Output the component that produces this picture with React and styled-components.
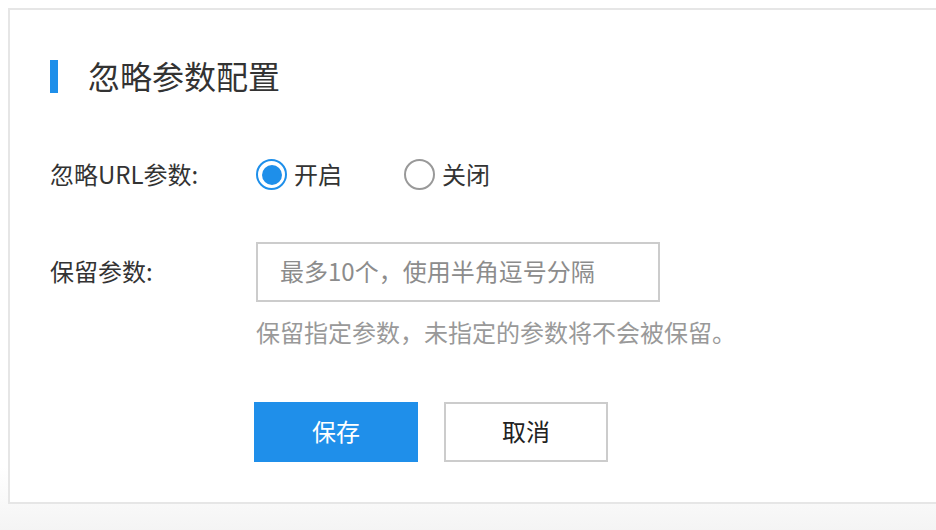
import React, { useState } from 'react';
import styled, { createGlobalStyle } from 'styled-components';

const GlobalStyle = createGlobalStyle`
  html, body {
    margin: 0;
    padding: 0;
  }
  body {
    font-family: "Noto Sans CJK SC", "Noto Sans", sans-serif;
    color: #333;
  }
`;

const Page = styled.div`
  width: 936px;
  height: 530px;
  overflow: hidden;
  box-sizing: border-box;
  padding: 8px 0 0 8px;
  background: linear-gradient(to bottom, #fff 0%, #fff 88%, #f4f4f4 100%);
`;

const Card = styled.div`
  box-sizing: border-box;
  width: 980px;
  height: 496px;
  border: 2px solid #e6e6e6;
  background: #fff;
  padding: 49px 40px 40px;
`;

const Header = styled.div`
  display: flex;
  align-items: center;
  gap: 30px;
  height: 33px;
`;

const Bar = styled.span`
  width: 8px;
  height: 33px;
  margin-top: 1px;
  background: #1e8fea;
`;

const Title = styled.h2`
  margin: 0;
  font-size: 32px;
  font-weight: 400;
  line-height: 31px;
  color: #333;
`;

const Form = styled.div`
  display: flex;
  flex-direction: column;
  margin-top: 65px;
`;

const Row = styled.div`
  display: flex;
  align-items: ${(p) => (p.$top ? 'flex-start' : 'center')};
  margin-top: ${(p) => p.$gap || 0}px;
`;

const Label = styled.div`
  width: 206px;
  flex: none;
  font-size: 24px;
  line-height: 30px;
  color: #333;
  padding-top: ${(p) => p.$pad || 0}px;
`;

const Field = styled.div`
  display: flex;
  flex-direction: column;
`;

const RadioGroup = styled.div`
  display: flex;
  align-items: center;
  gap: 62px;
`;

const Option = styled.label`
  display: flex;
  align-items: center;
  gap: 7px;
  cursor: pointer;
  font-size: 24px;
  line-height: 30px;
  color: #333;
`;

const Circle = styled.span`
  box-sizing: border-box;
  width: 31px;
  height: 31px;
  margin-top: 2px;
  border-radius: 50%;
  border: 2px solid ${(p) => (p.$on ? '#1e8fea' : '#999')};
  display: flex;
  align-items: center;
  justify-content: center;
  &::after {
    content: '';
    width: 20px;
    height: 20px;
    border-radius: 50%;
    background: #1e8fea;
    display: ${(p) => (p.$on ? 'block' : 'none')};
  }
`;

const Input = styled.input`
  box-sizing: border-box;
  width: 404px;
  height: 60px;
  border: 2px solid #ccc;
  border-radius: 0;
  padding: 0 22px 3px;
  font-family: inherit;
  font-size: 24px;
  color: #333;
  outline: none;
  &::placeholder {
    color: #8c8c8c;
  }
`;

const Hint = styled.div`
  margin-top: 18px;
  font-size: 24px;
  line-height: 24px;
  color: #999;
`;

const Actions = styled.div`
  display: flex;
  gap: 26px;
  margin-top: 58px;
  margin-left: 204px;
`;

const Button = styled.button`
  box-sizing: border-box;
  width: 164px;
  height: 60px;
  border-radius: 0;
  padding: 0 0 3px;
  font-family: inherit;
  font-size: 24px;
  cursor: pointer;
  background: ${(p) => (p.$primary ? '#1f8fea' : '#fff')};
  color: ${(p) => (p.$primary ? '#fff' : '#222')};
  border: 2px solid ${(p) => (p.$primary ? '#1f8fea' : '#ccc')};
`;

export default function App() {
  const [ignore, setIgnore] = useState(true);

  return (
    <>
      <GlobalStyle />
      <Page>
        <Card>
          <Header>
            <Bar />
            <Title>忽略参数配置</Title>
          </Header>
          <Form>
            <Row>
              <Label>忽略URL参数:</Label>
              <RadioGroup>
                <Option onClick={() => setIgnore(true)}>
                  <Circle $on={ignore} />
                  开启
                </Option>
                <Option onClick={() => setIgnore(false)}>
                  <Circle $on={!ignore} />
                  关闭
                </Option>
              </RadioGroup>
            </Row>
            <Row $top $gap={52}>
              <Label $pad={14}>保留参数:</Label>
              <Field>
                <Input placeholder="最多10个，使用半角逗号分隔" />
                <Hint>保留指定参数，未指定的参数将不会被保留。</Hint>
              </Field>
            </Row>
            <Actions>
              <Button $primary>保存</Button>
              <Button>取消</Button>
            </Actions>
          </Form>
        </Card>
      </Page>
    </>
  );
}
